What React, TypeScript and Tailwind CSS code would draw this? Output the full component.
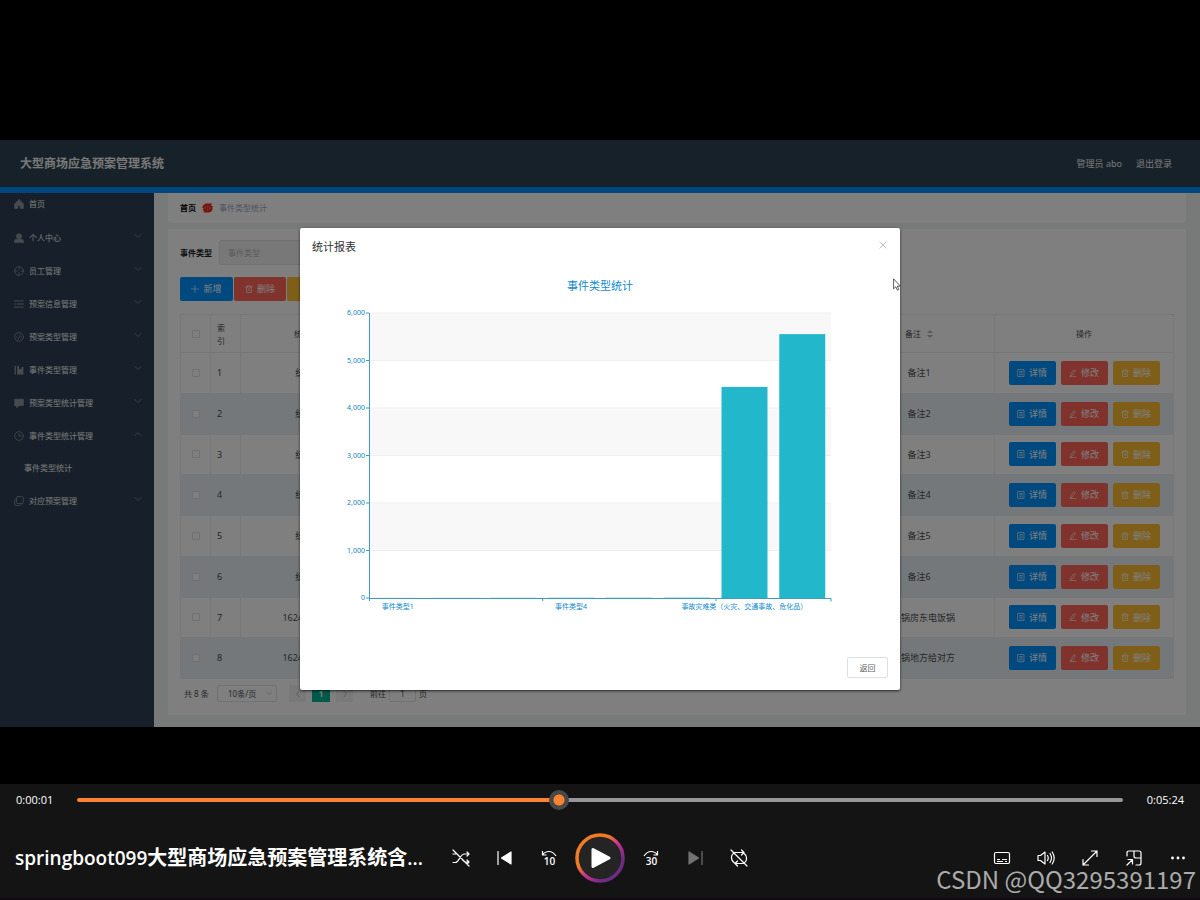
import { type ReactNode } from 'react'
import clsx from 'clsx'

const menu = [
  { label: '首页', icon: 'home' },
  { label: '个人中心', icon: 'user' },
  { label: '员工管理', icon: 'aim' },
  { label: '预案信息管理', icon: 'list' },
  { label: '预案类型管理', icon: 'gauge' },
  { label: '事件类型管理', icon: 'book' },
  { label: '预案类型统计管理', icon: 'chat' },
  { label: '事件类型统计管理', icon: 'clock', open: true, child: '事件类型统计' },
  { label: '对应预案管理', icon: 'copy' },
]

const rows = [
  { no: '统计编号1', type: '事件类型1', note: '备注1' },
  { no: '统计编号2', type: '事件类型2', note: '备注2' },
  { no: '统计编号3', type: '事件类型3', note: '备注3' },
  { no: '统计编号4', type: '事件类型4', note: '备注4' },
  { no: '统计编号5', type: '事件类型5', note: '备注5' },
  { no: '统计编号6', type: '事件类型6', note: '备注6' },
  { no: '1624410275131', type: '事故灾难类', note: '电饭锅房东电饭锅' },
  { no: '1624410290562', type: '事故灾难类', note: '电饭锅地方给对方' },
]

const chartData = [
  { name: '事件类型1', value: 1 },
  { name: '事件类型2', value: 2 },
  { name: '事件类型3', value: 3 },
  { name: '事件类型4', value: 4 },
  { name: '事件类型5', value: 5 },
  { name: '事件类型6', value: 6 },
  { name: '事故灾难类（火灾、交通事故、危化品）', value: 4444 },
  { name: '公共卫生类', value: 5555 },
]

const menuIcons: Record<string, ReactNode> = {
  home: <path d="M8 1 1 8v7h5v-4.500h4V15h5V8z" fill="currentColor" />,
  user: (
    <g fill="currentColor">
      <circle cx="8" cy="5" r="4" />
      <path d="M1 15v-2.500Q1 10 4 10h8q3 0 3 2.500V15z" />
    </g>
  ),
  aim: (
    <g>
      <circle cx="8" cy="8" r="7" />
      <path d="M8 1v4M8 11v4M1 8h4M11 8h4" />
    </g>
  ),
  list: <path d="M1 3h14M5 8h10M1 8h2M1 13h14" strokeWidth="1.600" />,
  gauge: (
    <g>
      <circle cx="8" cy="8" r="7" />
      <path d="M7 12 9.500 5M4 8h1M11 8h1" />
    </g>
  ),
  book: <path d="M1 1h2v14H1zM5 1h3v6l2-1.500L12 7V3h3v12H5z" fill="currentColor" stroke="none" />,
  chat: <path d="M1 2h14v10H8l-4 3.500V12H1z" fill="currentColor" />,
  clock: (
    <g>
      <circle cx="8" cy="8" r="7" />
      <path d="M8 3.500V8h4" />
    </g>
  ),
  copy: (
    <g>
      <rect x="4" y="1" width="11" height="11" rx="2" />
      <path d="M2 4.500Q1 5 1 7v6q0 2 2 2h6q2 0 2.500-1" />
    </g>
  ),
}

function Glyph({ children, className, box = 16 }: { children: ReactNode; className: string; box?: number }) {
  return (
    <svg
      viewBox={`0 0 ${box} ${box}`}
      className={clsx('shrink-0', className)}
      fill="none"
      stroke="currentColor"
      strokeWidth="1.2"
      strokeLinecap="round"
      strokeLinejoin="round"
      aria-hidden="true"
    >
      {children}
    </svg>
  )
}

const TrashIcon = () => (
  <Glyph className="size-2">
    <path d="M1 4h14M5 4V1.500h6V4M3 4v11h10V4M6.500 7.500v4M9.500 7.500v4" />
  </Glyph>
)

const DocIcon = () => (
  <Glyph className="size-2">
    <path d="M2 1h12v14H2zM5 5h6M5 8h6M5 11.500h6" />
  </Glyph>
)

const EditIcon = () => (
  <Glyph className="size-2">
    <path d="M3 13 4 9l6-8 3 2.500-6 8zM2 15h12" />
  </Glyph>
)

function ActionButton({ className, icon, children }: { className: string; icon: ReactNode; children: ReactNode }) {
  return (
    <button className={clsx('flex h-6 items-center justify-center gap-1 rounded-xs text-[9px] text-white', className)}>
      {icon}
      {children}
    </button>
  )
}

function SortArrows() {
  return (
    <svg viewBox="0 0 6 8" className="ml-1.5 inline-block h-2 w-1.5 text-[#b0b3b8]" fill="currentColor" aria-hidden="true">
      <path d="M3 0 6 3H0zM3 8 0 5h6z" />
    </svg>
  )
}

function Sidebar() {
  return (
    <nav className="w-[154px] shrink-0 bg-[#2e4154] text-[8px] text-[#f2f2f2]">
      {menu.map((item, i) => (
        <div key={item.label}>
          <a
            href="#"
            className={clsx('flex items-center gap-[5px] pl-3.5 pr-3', i === 0 ? 'h-7 pb-1.5' : 'h-[33px]')}
          >
            <Glyph className="size-2.5 text-[#8e959c]">{menuIcons[item.icon]}</Glyph>
            <span className="flex-1">{item.label}</span>
            {i > 0 && (
              <Glyph className="mb-1 size-2 text-[#98a0a8]">
                <path d={item.open ? 'M2 11l6-6 6 6' : 'M2 5l6 6 6-6'} />
              </Glyph>
            )}
          </a>
          {item.child && (
            <a href="#" className="flex h-8 items-center pl-6">
              {item.child}
            </a>
          )}
        </div>
      ))}
    </nav>
  )
}

function DataTable() {
  const cell = 'border border-[#eceff2] p-0'
  const check = 'block mx-auto size-2 appearance-none rounded-[1px] border border-[#dfe1e5] bg-white'
  return (
    <table className="mt-[13px] h-[365px] w-full table-fixed border-collapse text-center text-[9px] text-[#4c4e52]">
      <colgroup>
        <col className="w-[30px]" />
        <col className="w-[30px]" />
        <col />
        <col />
        <col />
        <col />
        <col />
        <col className="w-[179px]" />
      </colgroup>
      <thead>
        <tr className="h-[38px] text-[8px]">
          <th className={cell}>
            <input type="checkbox" aria-label="全选" className={check} />
          </th>
          <th className={clsx(cell, 'px-1.5 text-left font-normal leading-[13px]')}>索 引</th>
          {['统计编号', '事件类型', '事件数量', '统计日期', '备注'].map((h) => (
            <th key={h} className={clsx(cell, 'font-normal')}>
              {h}
              <SortArrows />
            </th>
          ))}
          <th className={clsx(cell, 'font-normal')}>操作</th>
        </tr>
      </thead>
      <tbody>
        {rows.map((row, i) => (
          <tr key={row.no} className={i % 2 ? 'bg-[#eaf0f4]' : 'bg-white'}>
            <td className={cell}>
              <input type="checkbox" aria-label={`选择第${i + 1}行`} className={check} />
            </td>
            <td className={clsx(cell, 'pl-1.5 text-left')}>{i + 1}</td>
            <td className={cell}>{row.no}</td>
            <td className={cell}>{row.type}</td>
            <td className={cell}>{chartData[i].value}</td>
            <td className={cell}>2021-06-23</td>
            <td className={cell}>{row.note}</td>
            <td className={cell}>
              <div className="flex justify-center gap-[5px]">
                <ActionButton className="w-[47px] bg-[#0092ff]" icon={<DocIcon />}>
                  详情
                </ActionButton>
                <ActionButton className="w-[47px] bg-[#ff6658]" icon={<EditIcon />}>
                  修改
                </ActionButton>
                <ActionButton className="w-[47px] bg-[#fcbc30]" icon={<TrashIcon />}>
                  删除
                </ActionButton>
              </div>
            </td>
          </tr>
        ))}
      </tbody>
    </table>
  )
}

function Pagination() {
  return (
    <div className="mt-1.5 flex h-[17px] items-center pl-1 text-[8px] text-[#505256]">
      <span className="w-[33px]">共 8 条</span>
      <div className="relative">
        <select
          aria-label="每页条数"
          className="block h-[17px] w-[60px] appearance-none rounded-xs border border-[#e2e4e8] bg-white pl-2.5"
        >
          <option>10条/页</option>
        </select>
        <Glyph className="absolute right-1 top-1 size-2 text-[#a8abb0]">
          <path d="M3 6l5 5 5-5" />
        </Glyph>
      </div>
      <div className="ml-3 flex gap-1.5">
        <button aria-label="上一页" className="flex h-[17px] w-[17px] items-center justify-center bg-[#f2f3f5]">
          <Glyph className="size-2 text-[#909398]">
            <path d="M10 3 5 8l5 5" />
          </Glyph>
        </button>
        <button className="h-[17px] w-[18px] bg-[#00b48e] font-bold text-white">1</button>
        <button aria-label="下一页" className="flex h-[17px] w-[17px] items-center justify-center bg-[#f2f3f5]">
          <Glyph className="size-2 text-[#909398]">
            <path d="M6 3l5 5-5 5" />
          </Glyph>
        </button>
      </div>
      <label className="ml-[17px] flex items-center gap-[3px]">
        前往
        <input
          defaultValue="1"
          className="h-[17px] w-[27px] rounded-xs border border-[#e2e4e8] bg-white text-center"
        />
        页
      </label>
    </div>
  )
}

function Content() {
  return (
    <main className="flex min-w-0 flex-1 flex-col gap-1.5 bg-[#eef5f2] px-[14px] pb-3">
      <div className="flex h-[30px] items-center gap-1.5 rounded-b-sm bg-white px-3 text-[8px]">
        <b className="text-black">首页</b>
        <svg viewBox="0 0 22 20" className="h-2.5 w-[11px]" aria-hidden="true">
          <path
            d="M7 1h13l-2 5h4l-2 5h2l-4 7-6 1H3l2-4H1l2-5H0l3-6z"
            fill="#ff2012"
          />
          <path d="M8 6 6 13M12 4l-1 12M16 7l-1 6M3 10h4M13 10h5" stroke="#a89090" strokeWidth="1.5" fill="none" />
        </svg>
        <span className="text-[#a0a8c0]">事件类型统计</span>
      </div>
      <section className="flex-1 bg-white px-3 pb-3 pt-[11px]">
        <label className="flex items-center gap-[7px] text-[8px] font-bold text-[#202020]">
          事件类型
          <input
            placeholder="事件类型"
            className="h-[25px] w-[120px] rounded-xs border border-[#e2e2e4] bg-[#f3f1f3] px-2 font-normal placeholder:text-[#b8b6ba]"
          />
        </label>
        <div className="mt-3 flex gap-px">
          <ActionButton
            className="w-[53px] bg-[#0092ff]"
            icon={
              <Glyph className="size-2">
                <path d="M8 1v14M1 8h14" />
              </Glyph>
            }
          >
            新增
          </ActionButton>
          <ActionButton className="w-[52px] bg-[#ff6658]" icon={<TrashIcon />}>
            删除
          </ActionButton>
          <ActionButton className="w-[78px] bg-[#fcbc30]" icon={<DocIcon />}>
            统计报表
          </ActionButton>
        </div>
        <DataTable />
        <Pagination />
      </section>
    </main>
  )
}

const axis = { left: 69, right: 531, top: 49, bottom: 334, max: 6000 }

function BarChart() {
  const yOf = (v: number) => axis.bottom - (v / axis.max) * (axis.bottom - axis.top)
  const step = (axis.right - axis.left) / chartData.length
  const ticks = [0, 1000, 2000, 3000, 4000, 5000, 6000]
  return (
    <svg viewBox="0 0 600 376" className="block w-full" role="img" aria-label="事件类型统计">
      <text x="300" y="26" textAnchor="middle" fontSize="11" fill="#108acb">
        事件类型统计
      </text>
      {[1000, 3000, 5000].map((v) => (
        <rect key={v} x={axis.left} y={yOf(v + 1000)} width={axis.right - axis.left} height={yOf(v) - yOf(v + 1000)} fill="#f8f8f8" />
      ))}
      {ticks.map((v) => (
        <g key={v}>
          <path d={`M${axis.left} ${yOf(v)}H${axis.right}`} stroke="#efefef" />
          <path d={`M${axis.left - 3} ${yOf(v)}h3`} stroke="#3d9cc0" />
          <text x="65" y={yOf(v) + 2} textAnchor="end" fontSize="7" fill="#1284b8">
            {v.toLocaleString('en-US')}
          </text>
        </g>
      ))}
      {chartData.map((d, i) => (
        <rect key={d.name} x={axis.left + step * i + 6} y={yOf(d.value)} width="46" height={axis.bottom - yOf(d.value)} fill="#23b7cb" />
      ))}
      <path
        d={`M${axis.left + 0.5} ${axis.top}V${axis.bottom + 3}M${axis.left} ${axis.bottom + 0.5}H${axis.right}v3`}
        fill="none"
        stroke="#3d9cc0"
      />
      {[0, 3, 6].map((i) => (
        <g key={i}>
          <path d={`M${axis.left + step * i + 0.5} ${axis.bottom}v3`} stroke="#3d9cc0" />
          <text x={axis.left + step * (i + 0.5)} y="345" textAnchor="middle" fontSize="7" fill="#108acb">
            {chartData[i].name}
          </text>
        </g>
      ))}
    </svg>
  )
}

function ReportDialog() {
  return (
    <div className="absolute inset-0 bg-black/50">
      <div role="dialog" aria-label="统计报表" className="relative mx-auto mt-[88px] w-1/2 rounded-xs bg-white shadow-sm shadow-black/60">
        <header className="flex h-9 items-center justify-between px-3 text-[11px] text-[#303133]">
          <h2 className="pt-0.5">统计报表</h2>
          <button aria-label="关闭" className="pb-0.5 text-[#a4a7ac]">
            <Glyph className="size-2.5">
              <path d="M3 3l10 10M13 3 3 13" />
            </Glyph>
          </button>
        </header>
        <BarChart />
        <footer className="flex justify-end px-3 pb-3 pt-[17px]">
          <button className="h-[21px] w-[41px] rounded-xs border border-[#dcdfe6] text-[8px] text-[#606266]">返回</button>
        </footer>
        <svg viewBox="0 0 8 13" className="absolute -right-px top-[50px] h-[13px] w-2" aria-hidden="true">
          <path d="M.6.800v10l2.200-2 1.600 3.400 1.400-.7L4.300 8.200h3z" fill="#fff" stroke="#333" strokeWidth=".8" />
        </svg>
      </div>
    </div>
  )
}

function AdminFrame() {
  return (
    <div className="relative overflow-hidden">
      <header className="flex h-[53px] items-center justify-between border-b-[6px] border-[#008cff] bg-[#2e4252] pl-5 pr-7 text-[9px] text-[#f0f0f0]">
        <h1 className="text-xs font-bold">大型商场应急预案管理系统</h1>
        <div className="flex gap-3.5">
          <span>管理员 abo</span>
          <a href="#">退出登录</a>
        </div>
      </header>
      <div className="flex h-[534px]">
        <Sidebar />
        <Content />
      </div>
      <ReportDialog />
    </div>
  )
}

function PlayerButton({ label, className, children }: { label: string; className?: string; children: ReactNode }) {
  return (
    <button aria-label={label} className={clsx('flex h-11 w-11 items-center justify-center', className)}>
      <Glyph className="size-[18px]" box={18}>
        {children}
      </Glyph>
    </button>
  )
}

function Player() {
  return (
    <div className="relative border-b-2 border-[#100a10] bg-[#141414] font-['Open_Sans','Noto_Sans_CJK_SC',sans-serif] text-white">
      <div className="flex h-8 items-center px-4 text-[11px]">
        <span className="w-[61px]">0:00:01</span>
        <input
          type="range"
          aria-label="播放进度"
          defaultValue="46"
          className="h-5 min-w-0 flex-1 appearance-none bg-transparent [&::-webkit-slider-runnable-track]:h-1 [&::-webkit-slider-runnable-track]:rounded-full [&::-webkit-slider-runnable-track]:bg-[linear-gradient(to_right,#ff8330_46%,#969696_46%)] [&::-webkit-slider-thumb]:-mt-2 [&::-webkit-slider-thumb]:size-5 [&::-webkit-slider-thumb]:appearance-none [&::-webkit-slider-thumb]:rounded-full [&::-webkit-slider-thumb]:bg-[radial-gradient(circle,#ff8330_5px,#484848_6px)]"
        />
        <span className="w-[61px] text-right">0:05:24</span>
      </div>
      <div className="grid h-[82px] grid-cols-[1fr_auto_1fr] items-center pt-0.5">
        <h2 className="overflow-hidden whitespace-nowrap pl-[15px] text-[19px] font-semibold">
          springboot099<span className="text-xl font-bold">大型商场应急预案管理系统含</span>...
        </h2>
        <div className="flex items-center">
          <PlayerButton label="随机播放">
            <path d="M1 13.500h2.500C7 13.500 8 5 12.500 5H17M1 5h2.500M10.500 11Q12 13 14 13h3M15 3l2 2-2 2M15 11l2 2-2 2M1 1l16 16" />
          </PlayerButton>
          <PlayerButton label="上一个">
            <path d="M2 2.500v13" />
            <path d="M15 3v12L5.500 9z" fill="currentColor" />
          </PlayerButton>
          <button aria-label="后退10秒" className="flex h-11 w-11 items-center justify-center">
            <svg viewBox="0 0 18 18" className="size-[18px]" fill="none" stroke="currentColor" strokeWidth="1.2">
              <path d="M2.500 2v4h4M2.500 6Q5 2.500 9 2.500T16 7" />
              <text x="9.500" y="16" textAnchor="middle" fontSize="10" fill="currentColor" stroke="none" className="font-['Open_Sans'] font-semibold">
                10
              </text>
            </svg>
          </button>
          <button aria-label="播放" className="flex h-[58px] w-[58px] items-center justify-center">
            <svg viewBox="0 0 50 50" className="size-[50px]">
              <defs>
                <linearGradient id="ring" x1="0.15" y1="0.15" x2="0.85" y2="0.85">
                  <stop offset="0.3" stopColor="#f27a22" />
                  <stop offset="0.55" stopColor="#c83290" />
                  <stop offset="0.9" stopColor="#6b2c82" />
                </linearGradient>
              </defs>
              <circle cx="25" cy="25" r="23" fill="#242424" stroke="url(#ring)" strokeWidth="3.500" />
              <path d="M18 16.500v17L34 25z" fill="#fff" stroke="#fff" strokeWidth="3" strokeLinejoin="round" />
            </svg>
          </button>
          <button aria-label="前进30秒" className="flex h-11 w-11 items-center justify-center">
            <svg viewBox="0 0 18 18" className="size-[18px]" fill="none" stroke="currentColor" strokeWidth="1.2">
              <path d="M15.500 2v4h-4M15.500 6Q13 2.500 9 2.500T2 7" />
              <text x="9.500" y="16" textAnchor="middle" fontSize="10" fill="currentColor" stroke="none" className="font-['Open_Sans'] font-semibold">
                30
              </text>
            </svg>
          </button>
          <PlayerButton label="下一个" className="text-[#727272]">
            <path d="M16 2.500v13" />
            <path d="M3 3v12l9.500-6z" fill="currentColor" />
          </PlayerButton>
          <PlayerButton label="循环播放">
            <path d="M4.500 14Q1.500 12 1.500 8.500T5 3.500h9M11.500 1 14 3.500 11.500 6M13.500 4Q16.500 6 16.500 9.500T13 14.500H5M7.500 12 5 14.500 7.500 17M1 1l16 16" />
          </PlayerButton>
        </div>
        <div className="flex justify-end">
          <PlayerButton label="字幕">
            <rect x="1.500" y="3.500" width="15" height="11" rx="1.500" />
            <path d="M4 10.500h3M9 10.500h5M4 12.500h6M12 12.500h2" strokeWidth="1" strokeLinecap="butt" />
          </PlayerButton>
          <PlayerButton label="音量">
            <path d="M1 6.500v5h2.500L8 15V3L3.500 6.500zM10.500 6.500q1.500 2.500 0 5M13 4.500q3 4.500 0 9M15.200 3q4 6 0 12" />
          </PlayerButton>
          <PlayerButton label="全屏">
            <path d="M2 16 16 2M10.500 2H16v5.500M2 10.500V16h5.500" />
          </PlayerButton>
          <PlayerButton label="迷你播放器">
            <path d="M2 7V4q0-2 2-2h10q2 0 2 2v10q0 2-2 2h-3M9 2v5q0 2 2 2h5M2 16l5-5M3 10.500h4.500V15" />
          </PlayerButton>
          <PlayerButton label="更多">
            <g fill="currentColor" stroke="none">
              <circle cx="3.500" cy="9" r="1.400" />
              <circle cx="9" cy="9" r="1.400" />
              <circle cx="14.500" cy="9" r="1.400" />
            </g>
          </PlayerButton>
        </div>
      </div>
      <span className="pointer-events-none absolute bottom-[3px] right-1 font-['Noto_Sans_CJK_SC',sans-serif] text-2xl text-[#ababab]">
        CSDN @QQ3295391197
      </span>
    </div>
  )
}

export default function App() {
  return (
    <div className="flex min-h-screen flex-col bg-black font-['Noto_Sans','Noto_Sans_CJK_SC',sans-serif]">
      <div className="flex-1 pb-[57px] pt-[140px]">
        <AdminFrame />
      </div>
      <Player />
    </div>
  )
}
